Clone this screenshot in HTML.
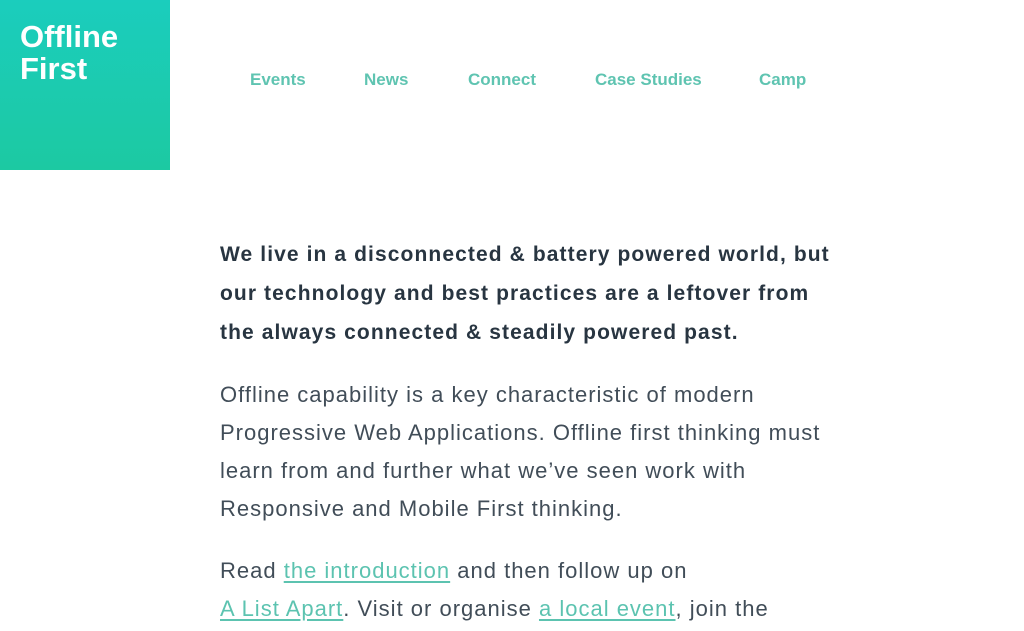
<!DOCTYPE html>
<html><head><meta charset="utf-8"><style>
body{margin:0;width:1024px;height:631px;overflow:hidden;background:#fff;font-family:"Liberation Sans",sans-serif;position:relative}
.logo{position:absolute;left:0;top:0;width:170px;height:170px;background:linear-gradient(#1bcdbd,#1cc9a2)}
.logo div{position:absolute;left:20px;top:21px;color:#fff;font-weight:bold;font-size:31px;line-height:32px;letter-spacing:0}
.nav a{position:absolute;top:70px;color:#5fc4b1;font-size:17px;font-weight:bold;text-decoration:none;white-space:nowrap}
.lead{position:absolute;left:220px;top:235px;font-size:21px;font-weight:bold;line-height:39px;color:#283541;white-space:nowrap;letter-spacing:1.1px}
.p{position:absolute;left:220px;font-size:22px;line-height:38px;color:#414d58;white-space:nowrap;letter-spacing:1px}
.p a{color:#5cc3b0;text-decoration:underline;text-underline-offset:3px}
</style></head><body>
<div class="logo"><div>Offline<br>First</div></div>
<div class="nav">
<a style="left:250px">Events</a>
<a style="left:364px">News</a>
<a style="left:468px">Connect</a>
<a style="left:595px">Case Studies</a>
<a style="left:759px">Camp</a>
</div>
<div class="lead">We live in a disconnected &amp; battery powered world, but<br>our technology and best practices are a leftover from<br>the always connected &amp; steadily powered past.</div>
<div class="p" style="top:376px">Offline capability is a key characteristic of modern<br>Progressive Web Applications. Offline first thinking must<br>learn from and further what we’ve seen work with<br>Responsive and Mobile First thinking.</div>
<div class="p" style="top:552px">Read <a>the introduction</a> and then follow up on<br><a>A List Apart</a>. Visit or organise <a>a local event</a>, join the</div>
</body></html>
